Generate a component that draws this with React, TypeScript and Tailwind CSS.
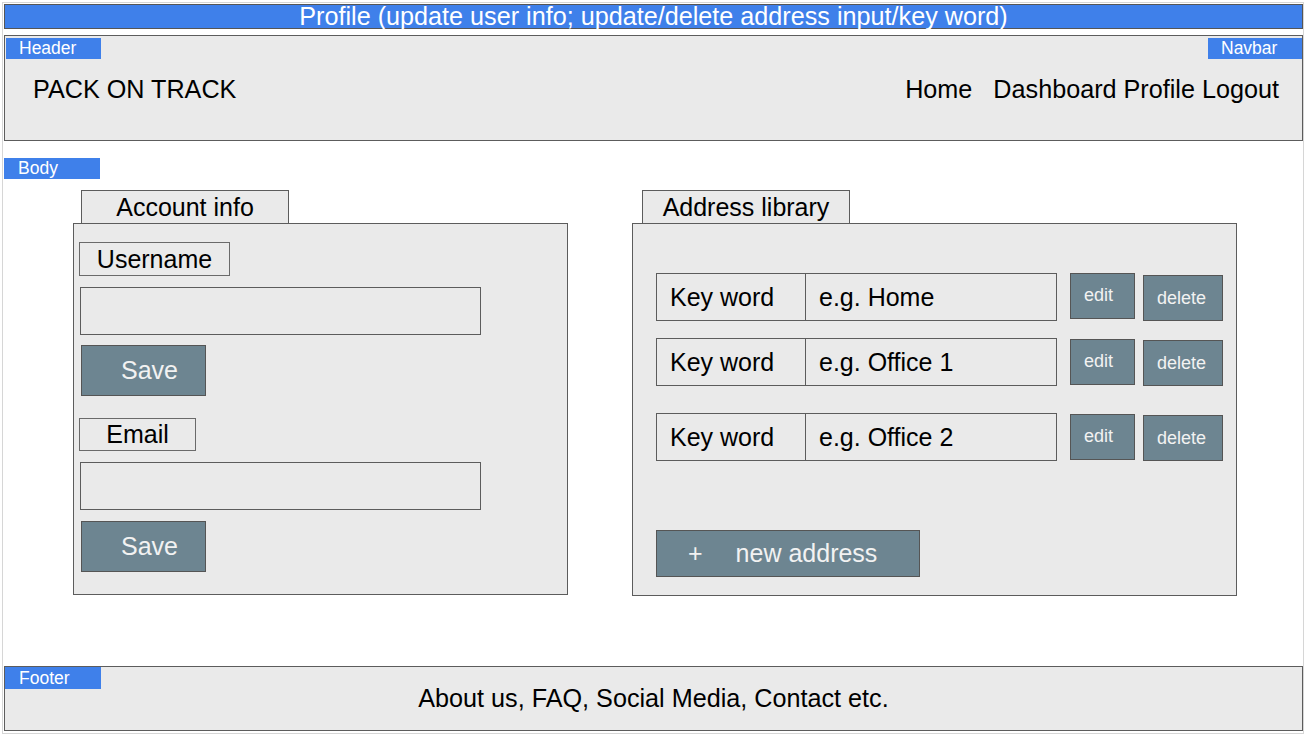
import React from "react";

const F = { fontFamily: '"Liberation Sans", Arial, sans-serif' };

function Tag({ children, w }: { children: React.ReactNode; w: string }) {
  return (
    <div className={`${w} h-[21px] bg-[#3f80ea] text-white text-[17.5px] leading-[21px] pl-[13px]`}>
      {children}
    </div>
  );
}

function Field({ value }: { value: string }) {
  return (
    <div className="flex w-[401px] h-[48px] border border-[#5c5c5c] bg-[#eaeaea] text-[25px] leading-[46px] text-black">
      <div className="w-[149px] border-r border-[#5c5c5c] pl-[13px]">Key word</div>
      <div className="pl-[13px]">{value}</div>
    </div>
  );
}

function Row({ value, mt, editMt }: { value: string; mt: string; editMt: string }) {
  return (
    <div className={`flex items-start ml-[23px] ${mt}`}>
      <Field value={value} />
      <div className={`ml-[13px] ${editMt} w-[65px] h-[46px] bg-[#6d8591] border border-[#555] text-[#f2f2f2] text-[18px] leading-[42px] pl-[13px]`}>
        edit
      </div>
      <div className="ml-[8px] mt-[2px] w-[80px] h-[46px] bg-[#6d8591] border border-[#555] text-[#f2f2f2] text-[18px] leading-[44px] pl-[13px]">
        delete
      </div>
    </div>
  );
}

export default function App() {
  return (
    <div style={F} className="w-[1306px] h-[736px] bg-white pt-[2px] pl-[2px] pr-[2px] pb-[2px]">
      <div className="h-[732px] border border-[#d6d6d6] flex flex-col">
        {/* title */}
        <div className="mt-[1px] ml-[1px] h-[25px] bg-[#3f80ea] border border-[#555] text-white text-[25.2px] leading-[22px] text-center">
          Profile (update user info; update/delete address input/key word)
        </div>

        {/* header */}
        <div className="relative mt-[6px] ml-[1px] h-[106px] border border-[#5c5c5c] bg-[#eaeaea] flex items-center justify-between pl-[28px] pr-[23px] pt-[3px] text-[25.2px] text-black">
          <div className="absolute left-[1px] top-[2px]">
            <Tag w="w-[95px]">Header</Tag>
          </div>
          <div className="absolute right-0 top-[2px]">
            <Tag w="w-[94px]">Navbar</Tag>
          </div>
          <div className="leading-[29px]">PACK ON TRACK</div>
          <div className="leading-[29px] flex">
            <span className="mr-[21px]">Home</span>
            <span>Dashboard Profile Logout</span>
          </div>
        </div>

        {/* body label */}
        <div className="mt-[17px] ml-[1px]">
          <div className="w-[96px] h-[21px] bg-[#3f80ea] text-white text-[17.5px] leading-[21px] pl-[14px]">Body</div>
        </div>

        {/* panels */}
        <div className="flex items-start mt-[11px] ml-[70px] text-black">
          {/* account */}
          <div className="w-[495px]">
            <div className="ml-[8px] w-[208px] h-[33px] border border-b-0 border-[#5c5c5c] bg-[#eaeaea] text-[25px] leading-[32px] text-center">
              Account info
            </div>
            <div className="h-[372px] border border-[#5c5c5c] bg-[#eaeaea] flex flex-col items-start">
              <div className="ml-[5px] mt-[18px] w-[151px] h-[34px] border border-[#6a6a6a] text-[25px] leading-[32px] text-center">Username</div>
              <div className="ml-[6px] mt-[11px] w-[401px] h-[48px] border border-[#5c5c5c]" />
              <div className="ml-[7px] mt-[10px] w-[125px] h-[51px] bg-[#6d8591] border border-[#555] text-[#f2f2f2] text-[25px] leading-[49px] pl-[39px]">Save</div>
              <div className="ml-[5px] mt-[22px] w-[117px] h-[33px] border border-[#6a6a6a] text-[25px] leading-[31px] text-center">Email</div>
              <div className="ml-[6px] mt-[11px] w-[401px] h-[48px] border border-[#5c5c5c]" />
              <div className="ml-[7px] mt-[11px] w-[125px] h-[51px] bg-[#6d8591] border border-[#555] text-[#f2f2f2] text-[25px] leading-[49px] pl-[39px]">Save</div>
            </div>
          </div>

          {/* address */}
          <div className="ml-[64px] w-[605px]">
            <div className="ml-[10px] w-[208px] h-[33px] border border-b-0 border-[#5c5c5c] bg-[#eaeaea] text-[25px] leading-[32px] text-center">
              Address library
            </div>
            <div className="h-[373px] border border-[#5c5c5c] bg-[#eaeaea] flex flex-col">
              <Row value="e.g. Home" mt="mt-[49px]" editMt="mt-0" />
              <Row value="e.g. Office 1" mt="mt-[17px]" editMt="mt-[1px]" />
              <Row value="e.g. Office 2" mt="mt-[27px]" editMt="mt-[1px]" />
              <div className="ml-[23px] mt-[69px] w-[264px] h-[47px] bg-[#6d8591] border border-[#555] text-[#f2f2f2] text-[25px] leading-[45px] flex">
                <span className="ml-[31px]">+</span>
                <span className="ml-[33px]">new address</span>
              </div>
            </div>
          </div>
        </div>

        {/* footer */}
        <div className="relative mt-auto mb-[2px] ml-[1px] h-[65px] border border-[#5c5c5c] bg-[#eaeaea] flex items-center justify-center text-[25.2px] text-black">
          <div className="absolute left-0 top-0">
            <div className="w-[96px] h-[22px] bg-[#3f80ea] text-white text-[17.5px] leading-[22px] pl-[14px]">Footer</div>
          </div>
          <div className="leading-[29px]">About us, FAQ, Social Media, Contact etc.</div>
        </div>
      </div>
    </div>
  );
}
